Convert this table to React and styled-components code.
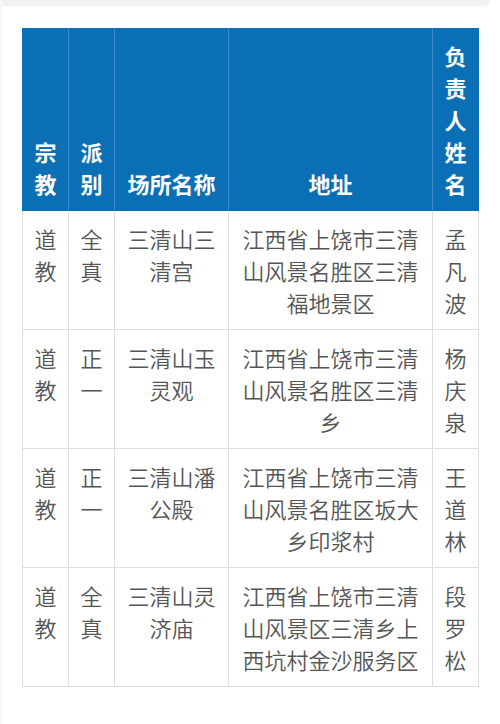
import React from "react";
import styled, { createGlobalStyle } from "styled-components";

const Global = createGlobalStyle`
  html, body { margin: 0; padding: 0; background: #fff; }
  body { font-family: "Noto Sans CJK SC", "Noto Sans", sans-serif; }
`;

const Page = styled.div`
  width: 500px;
  min-height: 724px;
  background: #fff;
  box-sizing: border-box;
  border-left: 2px solid #f8f8f8;
`;

const TopBar = styled.div`
  width: 488px;
  height: 6px;
  background: #f2f2f2;
  border-bottom-right-radius: 8px;
`;

const Content = styled.div`
  padding: 22px 0 0 20px;
`;

const Table = styled.table`
  border-collapse: collapse;
  table-layout: fixed;
  width: 456px;
  font-size: 22px;
  line-height: 32px;
`;

const Th = styled.th`
  background: #0b6fb5;
  color: #fff;
  font-weight: 700;
  padding: 10px 11px 11px;
  vertical-align: bottom;
  text-align: center;
  border: 1px solid #3d8dcb;
  border-top-color: #0b6fb5;
  border-bottom-color: #0b6fb5;
  &:first-child { border-left-color: #0b6fb5; }
  &:last-child { border-right-color: #0b6fb5; }
`;

const Td = styled.td`
  color: #555;
  font-weight: 350;
  padding: 11px 11px;
  vertical-align: top;
  text-align: center;
  border: 1px solid #dedede;
  word-break: break-all;
`;

const rows = [
  ["道教", "全真", "三清山三清宫", "江西省上饶市三清山风景名胜区三清福地景区", "孟凡波"],
  ["道教", "正一", "三清山玉灵观", "江西省上饶市三清山风景名胜区三清乡", "杨庆泉"],
  ["道教", "正一", "三清山潘公殿", "江西省上饶市三清山风景名胜区坂大乡印浆村", "王道林"],
  ["道教", "全真", "三清山灵济庙", "江西省上饶市三清山风景区三清乡上西坑村金沙服务区", "段罗松"],
];

const headers = ["宗教", "派别", "场所名称", "地址", "负责人姓名"];
const widths = [46, 46, 114, 204, 46];

export default function App() {
  return (
    <Page>
      <Global />
      <TopBar />
      <Content>
        <Table>
          <colgroup>
            {widths.map((w, i) => (
              <col key={i} style={{ width: w }} />
            ))}
          </colgroup>
          <thead>
            <tr>
              {headers.map((h) => (
                <Th key={h}>{h}</Th>
              ))}
            </tr>
          </thead>
          <tbody>
            {rows.map((r, i) => (
              <tr key={i}>
                {r.map((c, j) => (
                  <Td key={j}>{c}</Td>
                ))}
              </tr>
            ))}
          </tbody>
        </Table>
      </Content>
    </Page>
  );
}
